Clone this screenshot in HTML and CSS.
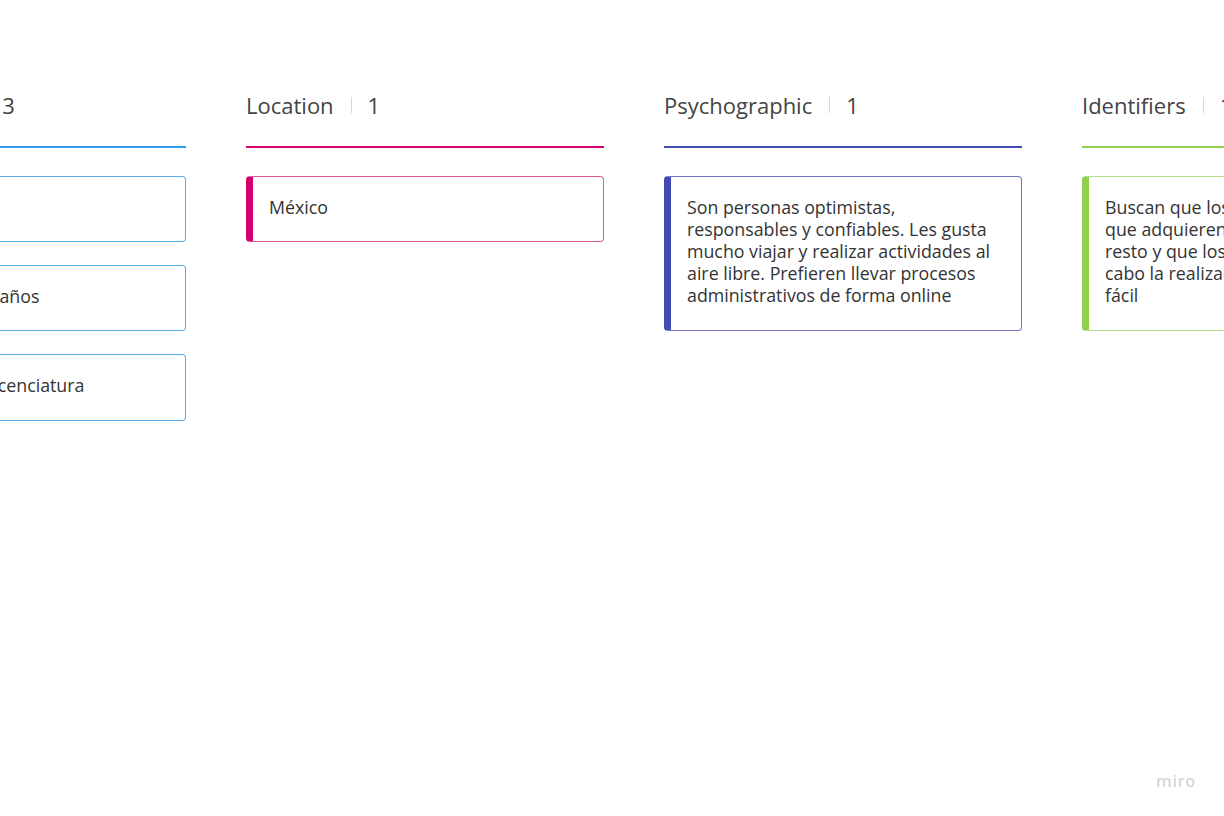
FILE: index.html
```html
<!DOCTYPE html>
<html lang="es">
<head>
<meta charset="utf-8">
<title>Persona board</title>
<link rel="stylesheet" href="styles.css">
</head>
<body>
<main class="board">
  <section class="column column--blue">
    <header class="column__head">
      <span class="column__title">Demographic</span>
      <span class="column__sep"></span>
      <span class="column__count">3</span>
    </header>
    <div class="column__cards">
      <div class="card">Ambos géneros</div>
      <div class="card">De los 25 a los 45 años</div>
      <div class="card">Con estudios de licenciatura</div>
    </div>
  </section>
  <section class="column column--pink">
    <header class="column__head">
      <span class="column__title">Location</span>
      <span class="column__sep"></span>
      <span class="column__count">1</span>
    </header>
    <div class="column__cards">
      <div class="card">México</div>
    </div>
  </section>
  <section class="column column--violet">
    <header class="column__head">
      <span class="column__title">Psychographic</span>
      <span class="column__sep"></span>
      <span class="column__count">1</span>
    </header>
    <div class="column__cards">
      <div class="card">Son personas optimistas, responsables y confiables. Les gusta mucho viajar y realizar actividades al aire libre. Prefieren llevar procesos administrativos de forma online</div>
    </div>
  </section>
  <section class="column column--green">
    <header class="column__head">
      <span class="column__title">Identifiers</span>
      <span class="column__sep"></span>
      <span class="column__count">1</span>
    </header>
    <div class="column__cards">
      <div class="card">Buscan que los productos y servicios que adquieren los hagan destacar del resto y que los apoyen para llevar a cabo la realización de sus tareas más fácil</div>
    </div>
  </section>
</main>
<div class="brand">miro</div>
</body>
</html>
```
FILE: styles.css
```css
html, body {
  margin: 0;
  padding: 0;
  background: #ffffff;
  overflow: hidden;
  height: 100%;
}

body {
  font-family: "Open Sans", "Noto Sans", sans-serif;
  color: #333333;
}

.board {
  display: flex;
  gap: 60px;
  margin-left: -172px;
  padding-top: 90px;
  width: max-content;
}

.column {
  flex: none;
  width: 358px;
}

.column__head {
  display: flex;
  align-items: center;
  height: 30px;
  padding-bottom: 26px;
  border-bottom: 2px solid;
  font-size: 22px;
  line-height: 30px;
  color: #444444;
}

.column__sep {
  width: 1px;
  height: 16px;
  background: #d6d6d6;
  margin: 0 16px 0 17px;
}

.column--blue .column__title {
  padding-left: 2px;
}

.column__cards {
  display: flex;
  flex-direction: column;
  gap: 23px;
  margin-top: 28px;
}

.card {
  border: 1px solid;
  border-left-width: 7px;
  border-radius: 4px;
  padding: 18.5px 20px 23.5px 16px;
  font-size: 17.8px;
  line-height: 22.2px;
  color: #333333;
}

.column--blue .column__head { border-bottom-color: #2d9bf0; }
.column--blue .card { border-color: #5aaee8; border-left-color: #2d9bf0; }

.column--pink .column__head { border-bottom-color: #d5006d; }
.column--pink .card { border-color: #dd5c98; border-left-color: #d5006d; }

.column--violet .column__head { border-bottom-color: #414bb2; }
.column--violet .card { border-color: #7176c2; border-left-color: #414bb2; }

.column--green .column__head { border-bottom-color: #8fd14f; }
.column--green .card { border-color: #b3df89; border-left-color: #8fd14f; }

.brand {
  position: fixed;
  right: 28px;
  bottom: 24px;
  font-family: "Open Sans", sans-serif;
  font-size: 16.5px;
  font-weight: 600;
  letter-spacing: 0.6px;
  color: #d6d6d6;
}
```
